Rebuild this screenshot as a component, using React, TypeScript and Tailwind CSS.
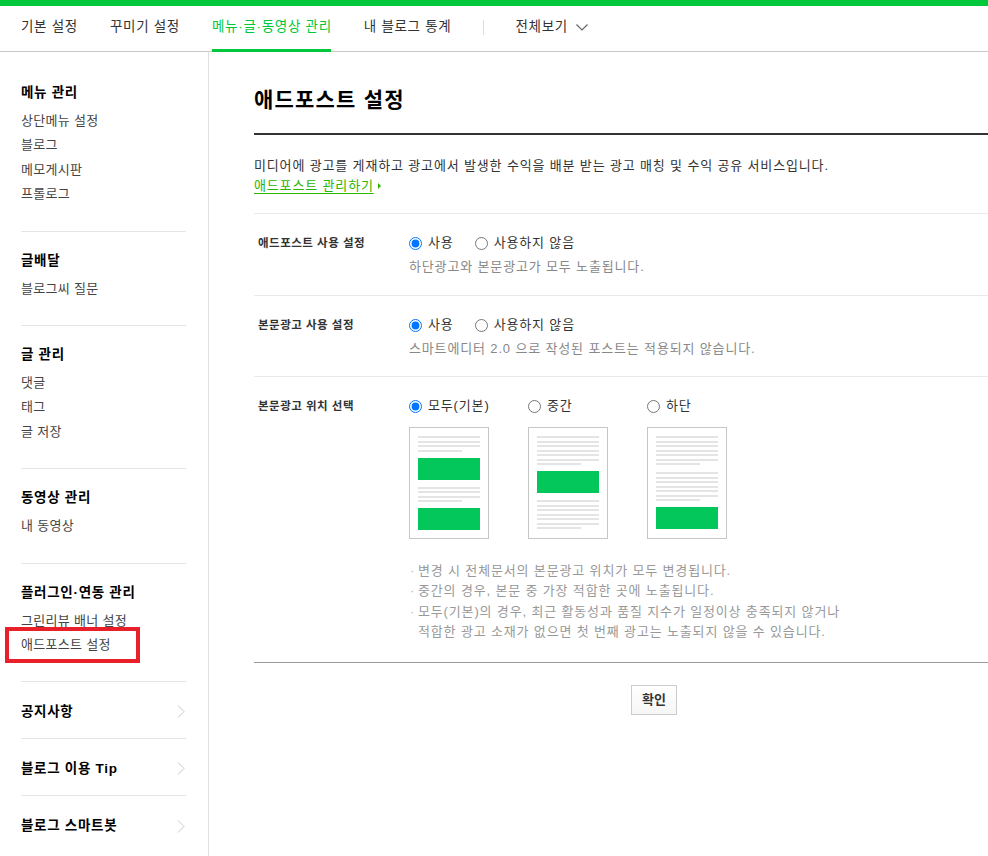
import React from "react";

const FONT = { fontFamily: '"Liberation Sans", "Noto Sans CJK KR", sans-serif' };

function ChevronRight() {
  return (
    <svg width="8" height="13" viewBox="0 0 8 13" fill="none">
      <path d="M1 0.5L7 6.5L1 12.5" stroke="#c8c8c8" strokeWidth="1" />
    </svg>
  );
}

function ChevronDown() {
  return (
    <svg width="12" height="7" viewBox="0 0 12 7" fill="none">
      <path d="M0.5 0.5L6 6L11.5 0.5" stroke="#666" strokeWidth="1.2" />
    </svg>
  );
}

function TopNav() {
  const items = ["기본 설정", "꾸미기 설정", "메뉴·글·동영상 관리", "내 블로그 통계"];
  return (
    <div className="shrink-0">
      <div className="h-[6px] bg-[#00c73c]" />
      <nav className="flex h-[46px] items-stretch gap-[32px] border-b border-[#c8c8c8] pl-[21px] text-[13.5px] tracking-[0.7px] text-[#333]">
        {items.map((t, i) => (
          <div
            key={t}
            className={`relative flex items-center pb-[2px] ${i === 2 ? "text-[#00c73c]" : ""}`}
          >
            {t}
            {i === 2 && <span className="absolute bottom-[-1px] left-0 right-[1px] h-[3px] bg-[#00c73c]" />}
          </div>
        ))}
        <div className="flex items-center gap-[31px] pb-[2px]">
          <span className="h-[15px] w-px bg-[#ddd]" />
          <span className="flex items-center gap-[8px]">
            전체보기 <ChevronDown />
          </span>
        </div>
      </nav>
    </div>
  );
}

type Section = { title: string; items: string[] };

const sections: Section[] = [
  { title: "메뉴 관리", items: ["상단메뉴 설정", "블로그", "메모게시판", "프롤로그"] },
  { title: "글배달", items: ["블로그씨 질문"] },
  { title: "글 관리", items: ["댓글", "태그", "글 저장"] },
  { title: "동영상 관리", items: ["내 동영상"] },
  { title: "플러그인·연동 관리", items: ["그린리뷰 배너 설정", "애드포스트 설정"] },
];

function Sidebar() {
  return (
    <aside className="w-[209px] shrink-0 border-r border-[#e0e0e0] pl-[21px]">
      <div className="w-[165px]">
        {sections.map((s, si) => (
          <div
            key={s.title}
            className={`border-b border-[#e5e5e5] pb-[24px] ${si === 0 ? "pt-[31px]" : "pt-[19px]"}`}
          >
            <div className="h-[20px] text-[13.5px] font-bold leading-[20px] tracking-[0.7px] text-black">
              {s.title}
            </div>
            <ul className="mt-[6px] text-[13px] tracking-[0.3px] text-[#444]">
              {s.items.map((it) => (
                <li key={it} className="relative h-[24.4px] leading-[24.4px]">
                  {it}
                  {it === "애드포스트 설정" && (
                    <span className="absolute left-[-16px] top-[-6px] h-[36px] w-[135px] border-[4px] border-[#e8202a]" />
                  )}
                </li>
              ))}
            </ul>
          </div>
        ))}
        {["공지사항", "블로그 이용 Tip", "블로그 스마트봇"].map((t, i) => (
          <div
            key={t}
            className={`flex h-[57px] items-center justify-between pr-[1px] pt-[3px] ${i < 2 ? "border-b border-[#e5e5e5]" : ""}`}
          >
            <span className="text-[13.5px] font-bold leading-[20px] tracking-[0.7px] text-black">{t}</span>
            <ChevronRight />
          </div>
        ))}
      </div>
    </aside>
  );
}

function Radio({ label, checked, name }: { label: string; checked?: boolean; name: string }) {
  return (
    <label className="flex h-[20px] items-center gap-[6px] text-[13px] leading-[20px] tracking-[0.85px] text-[#333]">
      <input type="radio" name={name} defaultChecked={checked} className="h-[13px] w-[13px]" />
      {label}
    </label>
  );
}

function Lines({ n }: { n: number }) {
  return (
    <div className="flex flex-col gap-[2.5px]">
      {Array.from({ length: n }).map((_, i) => (
        <div key={i} className={`h-[2px] bg-[#e4e4e4] ${i === n - 1 ? "w-[44px]" : "w-full"}`} />
      ))}
    </div>
  );
}

function Ad() {
  return <div className="mt-[6px] h-[22px] bg-[#03c75a]" />;
}

function Mock({ kind }: { kind: "all" | "mid" | "bottom" }) {
  return (
    <div className="h-[112px] w-[80px] border border-[#c6c6c6] bg-white px-[8px] pt-[8px]">
      {kind === "all" && (
        <>
          <Lines n={4} />
          <Ad />
          <div className="mt-[7px]">
            <Lines n={4} />
          </div>
          <Ad />
        </>
      )}
      {kind === "mid" && (
        <>
          <Lines n={7} />
          <Ad />
          <div className="mt-[7px]">
            <Lines n={7} />
          </div>
        </>
      )}
      {kind === "bottom" && (
        <>
          <Lines n={7} />
          <div className="mt-[7px]">
            <Lines n={7} />
          </div>
          <Ad />
        </>
      )}
    </div>
  );
}

const LABEL = "w-[151px] shrink-0 h-[20px] text-[11.5px] font-bold leading-[20px] tracking-[0.5px] text-[#333]";
const HELP = "mt-[4px] h-[20px] text-[13px] leading-[20px] tracking-[0.85px] text-[#888]";

function Row({ label, children, pb }: { label: string; children: React.ReactNode; pb: string }) {
  return (
    <div className={`flex border-b border-[#eaeaea] pl-[4px] pt-[19px] ${pb}`}>
      <div className={LABEL}>{label}</div>
      <div className="flex-1">{children}</div>
    </div>
  );
}

function Main() {
  const notes = [
    ["변경 시 전체문서의 본문광고 위치가 모두 변경됩니다."],
    ["중간의 경우, 본문 중 가장 적합한 곳에 노출됩니다."],
    [
      "모두(기본)의 경우, 최근 활동성과 품질 지수가 일정이상 충족되지 않거나",
      "적합한 광고 소재가 없으면 첫 번째 광고는 노출되지 않을 수 있습니다.",
    ],
  ];
  return (
    <main className="flex-1 overflow-hidden pl-[45px]">
      <div className="w-[800px]">
        <h1 className="mt-[34px] h-[28px] text-[21px] font-bold leading-[28px] tracking-[1.2px] text-black">
          애드포스트 설정
        </h1>
        <div className="mt-[19px] h-[2px] bg-[#333]" />
        <div className="border-b border-[#eaeaea] pb-[17px] pt-[21px] text-[13px] leading-[20px] tracking-[0.85px] text-[#333]">
          <p className="h-[20px]">
            미디어에 광고를 게재하고 광고에서 발생한 수익을 배분 받는 광고 매칭 및 수익 공유 서비스입니다.
          </p>
          <a className="flex h-[20px] items-center gap-[4px] text-[#2db400]">
            <span className="underline underline-offset-[3px]">애드포스트 관리하기</span>
            <svg width="3" height="6" viewBox="0 0 3 6">
              <path d="M0 0L3 3L0 6Z" fill="#2db400" />
            </svg>
          </a>
        </div>

        <Row label="애드포스트 사용 설정" pb="pb-[18px]">
          <div className="flex gap-[21px]">
            <Radio name="r1" label="사용" checked />
            <Radio name="r1" label="사용하지 않음" />
          </div>
          <p className={HELP}>하단광고와 본문광고가 모두 노출됩니다.</p>
        </Row>

        <Row label="본문광고 사용 설정" pb="pb-[17px]">
          <div className="flex gap-[21px]">
            <Radio name="r2" label="사용" checked />
            <Radio name="r2" label="사용하지 않음" />
          </div>
          <p className={HELP}>스마트에디터 2.0 으로 작성된 포스트는 적용되지 않습니다.</p>
        </Row>

        <div className="flex border-b border-[#9a9a9a] pb-[19px] pl-[4px] pt-[19px]">
          <div className={LABEL}>본문광고 위치 선택</div>
          <div className="flex-1">
            <div className="flex">
              {[
                { l: "모두(기본)", k: "all" as const, c: true },
                { l: "중간", k: "mid" as const },
                { l: "하단", k: "bottom" as const },
              ].map((o) => (
                <div key={o.l} className="w-[119px]">
                  <Radio name="r3" label={o.l} checked={o.c} />
                  <div className="mt-[11px]">
                    <Mock kind={o.k} />
                  </div>
                </div>
              ))}
            </div>
            <ul className="mt-[22px] text-[13px] tracking-[0.85px] text-[#999]">
              {notes.map((n, i) => (
                <li key={i} className="flex">
                  <span className="h-[20.4px] w-[9px] shrink-0 pl-[1px] leading-[20.4px] text-[#bbb]">·</span>
                  <div>
                    {n.map((line) => (
                      <div key={line} className="h-[20.4px] leading-[20.4px]">
                        {line}
                      </div>
                    ))}
                  </div>
                </li>
              ))}
            </ul>
          </div>
        </div>

        <div className="flex justify-center pt-[22px]">
          <button className="h-[30px] w-[46px] border border-[#ccc] bg-gradient-to-b from-white to-[#f6f6f6] text-[13px] font-bold text-[#333]">
            확인
          </button>
        </div>
      </div>
    </main>
  );
}

export default function App() {
  return (
    <div className="flex h-[856px] flex-col overflow-hidden bg-white" style={FONT}>
      <TopNav />
      <div className="flex min-h-0 flex-1">
        <Sidebar />
        <Main />
      </div>
    </div>
  );
}
